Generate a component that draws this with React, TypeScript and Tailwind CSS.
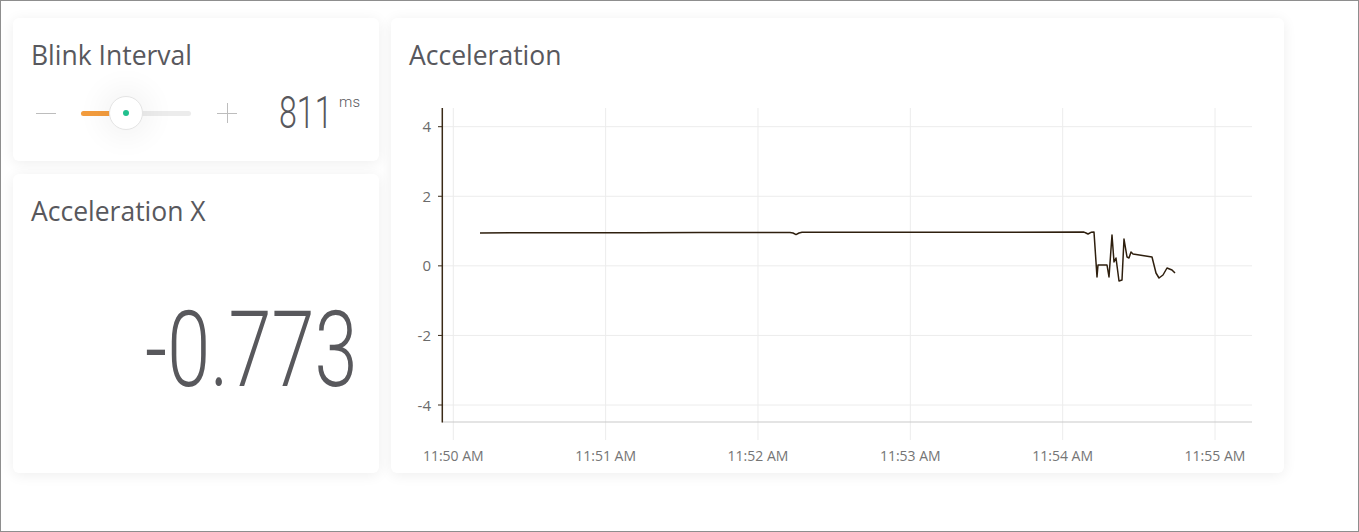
import React from "react";

const titleFont = { fontFamily: "'Open Sans', 'Noto Sans', sans-serif" };

type Pt = [number, number];

// page-space coordinates, the svg viewBox is offset to match
const y0 = 265.85;
const perUnit = 34.79;
const yPx = (v: number) => y0 - v * perUnit;

const yTicks = [4, 2, 0, -2, -4];
const xTicks = ["11:50 AM", "11:51 AM", "11:52 AM", "11:53 AM", "11:54 AM", "11:55 AM"];
const xAt = (i: number) => 453.3 + i * 152.34;

const series: Pt[] = [
  [480, 232.9], [560, 232.8], [640, 232.7], [700, 232.5], [790, 232.4],
  [793, 233], [796, 234.6], [799, 233], [802, 232.3], [900, 232.2],
  [1084, 232.1], [1086, 233], [1088, 234], [1091, 232.3], [1094, 232.1],
  [1097, 277], [1098, 265], [1107, 265], [1109, 277], [1112, 235],
  [1114, 262], [1116, 258], [1119, 281], [1122, 280], [1124, 239],
  [1127, 257], [1129, 258], [1131, 252], [1133, 254], [1152, 257],
  [1156, 273], [1159, 278], [1163, 275], [1167, 268], [1172, 270], [1175, 273],
];

function Card({ className, children }: { className: string; children: React.ReactNode }) {
  return (
    <div className={`bg-white rounded-[6px] shadow-[0_2px_14px_rgba(0,0,0,0.07)] ${className}`}>
      {children}
    </div>
  );
}

function Title({ children }: { children: React.ReactNode }) {
  return (
    <h2 className="text-[26.5px] leading-[32px] text-[#58585d]" style={titleFont}>
      {children}
    </h2>
  );
}

function BlinkInterval() {
  return (
    <Card className="h-[143px] px-[18px] pt-[21px]">
      <Title>Blink Interval</Title>
      <div className="mt-[18px] h-[48px] flex items-center pl-[5px] pr-px">
        {/* minus */}
        <span className="block w-[20px] h-px bg-[#bdbdbd]" />
        {/* slider */}
        <div className="relative ml-[25px] w-[110px] h-[5px] rounded-full bg-[#ececec]">
          <div className="absolute left-0 top-0 h-full w-[45px] rounded-full bg-[#f39c3d]" />
          <div className="absolute left-[28px] top-1/2 -translate-y-1/2 w-[34px] h-[34px] rounded-full bg-white border border-[#e4e4e4] shadow-[0_0_28px_10px_rgba(0,0,0,0.045)] flex items-center justify-center">
            <span className="block w-[6px] h-[6px] rounded-full bg-[#22c08e]" />
          </div>
        </div>
        {/* plus */}
        <span className="relative ml-[26px] block w-[20px] h-[20px]">
          <span className="absolute left-0 top-[9.5px] w-full h-px bg-[#bdbdbd]" />
          <span className="absolute top-0 left-[9.5px] h-full w-px bg-[#bdbdbd]" />
        </span>
        <div className="ml-auto flex items-start text-[#58585c]" style={{ fontFamily: "Roboto, sans-serif" }}>
          <span className="inline-block w-[52px] text-[44px] leading-none font-light whitespace-nowrap">
            <span className="inline-block origin-left scale-x-[0.73]">811</span>
          </span>
          <span className="ml-[8px] mt-[4px] text-[15px] leading-none font-light">ms</span>
        </div>
      </div>
    </Card>
  );
}

function AccelerationX() {
  return (
    <Card className="h-[299px] px-[18px] pt-[21px]">
      <Title>Acceleration X</Title>
      <div className="mt-[70px] flex justify-end pr-[2px]">
        <span
          className="inline-block w-[214px] text-[106px] leading-none font-light text-[#58585c] whitespace-nowrap"
          style={{ fontFamily: "Roboto, sans-serif" }}
        >
          <span className="inline-block origin-left scale-x-[0.73]">-0.773</span>
        </span>
      </div>
    </Card>
  );
}

function AccelerationChart() {
  const path = series.map(([x, y], i) => `${i ? "L" : "M"}${x} ${y}`).join(" ");
  return (
    <Card className="w-[893px] h-[455px] pt-[21px]">
      <div className="px-[18px]">
        <Title>Acceleration</Title>
      </div>
      <svg
        width={870}
        height={370}
        viewBox="401 100 870 370"
        className="block mt-[29px] ml-[10px]"
        style={{ fontFamily: "'Open Sans', sans-serif" }}
      >
        {yTicks.map((v) => (
          <g key={v}>
            <line x1={442} x2={1252} y1={yPx(v)} y2={yPx(v)} stroke="#ececec" strokeWidth={1} />
            <line x1={438} x2={442} y1={yPx(v)} y2={yPx(v)} stroke="#3a2a17" strokeWidth={1} />
            <text x={431} y={yPx(v) + 5.5} textAnchor="end" fontSize={15} fill="#6b6b6b">
              {v}
            </text>
          </g>
        ))}
        {xTicks.map((t, i) => (
          <g key={t}>
            <line x1={xAt(i)} x2={xAt(i)} y1={108} y2={440} stroke="#ececec" strokeWidth={1} />
            <text x={xAt(i)} y={461} textAnchor="middle" fontSize={14} fill="#757575">
              {t}
            </text>
          </g>
        ))}
        <line x1={442} x2={1252} y1={422} y2={422} stroke="#c9c9c9" strokeWidth={1} />
        <line x1={442.3} x2={442.3} y1={108} y2={422.5} stroke="#3a2a17" strokeWidth={1.5} />
        <path d={path} fill="none" stroke="#2e1f0e" strokeWidth={1.5} strokeLinejoin="round" />
      </svg>
    </Card>
  );
}

export default function App() {
  return (
    <div className="w-[1359px] h-[532px] border border-[#8e8e8e] bg-white pl-[12px] pt-[17px] flex gap-[12px]">
      <div className="w-[366px] flex flex-col gap-[13px]">
        <BlinkInterval />
        <AccelerationX />
      </div>
      <AccelerationChart />
    </div>
  );
}
